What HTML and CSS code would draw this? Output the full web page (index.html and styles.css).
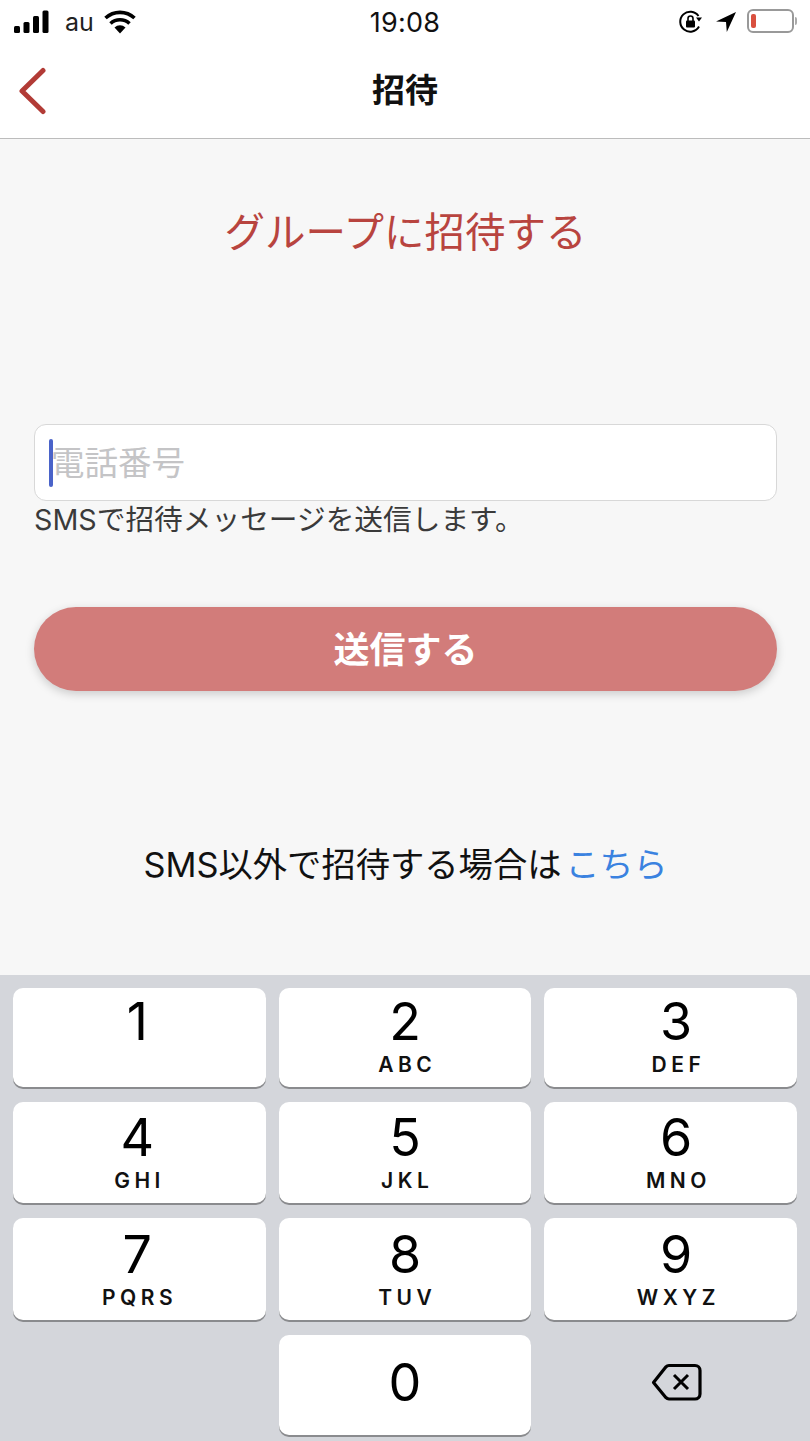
FILE: index.html
```html
<!DOCTYPE html>
<html lang="ja">
<head>
<meta charset="utf-8">
<title>招待</title>
<link rel="stylesheet" href="styles.css">
</head>
<body>
<div class="status">
  <div class="status-left">
    <svg class="signal" width="36" height="24" viewBox="0 0 36 24"><rect x="0" y="16" width="6" height="7" rx="1.5"/><rect x="9.5" y="12" width="6" height="11" rx="1.5"/><rect x="19" y="6" width="6" height="17" rx="1.5"/><rect x="28.500" y="0.500" width="6" height="22.500" rx="1.500"/></svg>
    <span class="carrier">au</span>
    <svg class="wifi" width="34" height="24" viewBox="0 0 34 24"><path d="M17 23.500l-5.500-6a8 8 0 0 1 11 0z"/><path d="M7.500 13.500a14 14 0 0 1 19 0" fill="none" stroke="#000" stroke-width="3.600"/><path d="M2.500 8a21.500 21.500 0 0 1 29 0" fill="none" stroke="#000" stroke-width="3.600"/></svg>
  </div>
  <div class="time">19:08</div>
  <div class="status-right">
    <svg class="lock" width="24" height="24" viewBox="0 0 24 24"><path d="M20 16.500A10 10 0 1 1 19.500 6" fill="none" stroke="#000" stroke-width="2"/><path d="M17 7.500l6 0-3 4z"/><rect x="7" y="10.500" width="9" height="7" rx="1"/><path d="M9 11V8.500a2.500 2.500 0 0 1 5 0V11" fill="none" stroke="#000" stroke-width="1.600"/></svg>
    <svg class="arrow" width="22" height="22" viewBox="0 0 22 22"><path d="M21 1L1 10.500l10 .6 .8 10z"/></svg>
    <div class="battery"><div class="battery-body"><div class="battery-level"></div></div><div class="battery-cap"></div></div>
  </div>
</div>
<header class="nav">
  <svg class="back" width="30" height="48" viewBox="0 0 30 48"><path d="M26 3.500L5 24l21 20.500" fill="none" stroke="#b23b36" stroke-width="5" stroke-linecap="round" stroke-linejoin="round"/></svg>
  <h1 class="nav-title">招待</h1>
</header>
<main class="main">
  <h2 class="heading">グループに招待する</h2>
  <div class="field"><span class="caret"></span><span class="placeholder">電話番号</span></div>
  <p class="help">SMSで招待メッセージを送信します。</p>
  <button class="send">送信する</button>
  <p class="other">SMS以外で招待する場合は<a class="link">こちら</a></p>
</main>
<section class="keyboard">
  <div class="key"><span class="num">1</span></div>
  <div class="key"><span class="num">2</span><span class="letters">ABC</span></div>
  <div class="key"><span class="num">3</span><span class="letters">DEF</span></div>
  <div class="key"><span class="num">4</span><span class="letters">GHI</span></div>
  <div class="key"><span class="num">5</span><span class="letters">JKL</span></div>
  <div class="key"><span class="num">6</span><span class="letters">MNO</span></div>
  <div class="key"><span class="num">7</span><span class="letters">PQRS</span></div>
  <div class="key"><span class="num">8</span><span class="letters">TUV</span></div>
  <div class="key"><span class="num">9</span><span class="letters">WXYZ</span></div>
  <div class="blank"></div>
  <div class="key zero"><span class="num">0</span></div>
  <div class="delete">
    <svg width="52" height="38" viewBox="0 0 52 38"><path d="M18 2.500H44a5 5 0 0 1 5 5V31a5 5 0 0 1-5 5H18a4 4 0 0 1-3-1.300L2.500 19.500 15 3.800a4 4 0 0 1 3-1.300z" fill="none" stroke="#000" stroke-width="3.200" stroke-linejoin="round"/><path d="M23 12l14 14M37 12L23 26" fill="none" stroke="#000" stroke-width="3"/></svg>
  </div>
</section>
</body>
</html>
```
FILE: styles.css
```css
* { box-sizing: border-box; }
html, body { margin: 0; padding: 0; }
body {
  width: 810px;
  height: 1441px;
  overflow: hidden;
  background: #fff;
  font-family: Inter, "Noto Sans CJK JP", sans-serif;
  color: #000;
}
.status {
  height: 40px;
  padding: 4px 13px 0 14px;
  display: grid;
  grid-template-columns: 1fr auto 1fr;
  align-items: center;
}
.status-left { display: flex; align-items: center; gap: 15px; }
.wifi { margin-left: -6px; }
.carrier { font-size: 25px; color: #222; }
.time { font-size: 27px; font-weight: 400; color: #111; letter-spacing: 0.3px; margin-right: 1px; }
.status-right { display: flex; align-items: center; justify-content: flex-end; gap: 10px; margin-top: -1px; }
.lock { margin-right: 2px; }
.battery { display: flex; align-items: center; gap: 1px; margin-top: -1px; }
.battery-body { width: 47px; height: 24px; border: 2px solid #999; border-radius: 6px; padding: 3px 2px; background: #fff; }
.battery-level { width: 5px; height: 14px; background: #d9503f; border-radius: 2px; }
.battery-cap { width: 2px; height: 8px; background: #aaa; border-radius: 0 2px 2px 0; }
.nav {
  height: 99px;
  border-bottom: 1px solid #bcbcbc;
  display: flex;
  align-items: center;
  justify-content: center;
  position: relative;
}
.back { position: absolute; left: 17px; top: 27px; }
.nav-title { margin: 2px 0 0; font-size: 33px; font-weight: 700; line-height: 1.3; color: #111; }
.main {
  height: 836px;
  background: #f7f7f7;
  padding: 64px 33px 0 34px;
  display: flex;
  flex-direction: column;
}
.heading { margin: 0; font-size: 40.500px; line-height: 60px; font-weight: 400; color: #b8443f; text-align: center; height: 60px; }
.field {
  margin-top: 161px;
  height: 77px;
  background: #fff;
  border: 1px solid #d8d8d8;
  border-radius: 12px;
  display: flex;
  align-items: center;
  padding-left: 14px;
}
.caret { width: 4px; height: 48px; background: #4a63c9; border-radius: 2px; flex: none; }
.placeholder { font-size: 33.500px; color: #c4c4c6; margin: -4px 0 0 -2px; }
.help { margin: 0; font-size: 28.700px; line-height: 38px; color: #3a3a3a; }
.send {
  margin-top: 68px;
  height: 84px;
  width: 743px;
  border: 0;
  padding: 0 0 4px;
  border-radius: 42px;
  background: #d27c7a;
  color: #fff;
  font: 700 36px Inter, "Noto Sans CJK JP", sans-serif;
  box-shadow: 0 3px 10px rgba(0, 0, 0, 0.18);
}
.other { margin: 151px 0 0; font-size: 34.300px; line-height: 46px; text-align: center; color: #111; }
.link { color: #3a82e0; margin-left: 4px; font-size: 34px; }
.keyboard {
  height: 466px;
  background: #d4d6db;
  padding: 13px 13px 6px;
  display: grid;
  grid-template-columns: repeat(3, 1fr);
  grid-template-rows: 99px 101px 102px 100px;
  column-gap: 13px;
  row-gap: 15px;
}
.key {
  background: #fff;
  border-radius: 10px;
  box-shadow: 0 2px 0 #8a8b8e;
  display: flex;
  flex-direction: column;
  align-items: center;
}
.key:nth-child(3n+1) { padding-right: 4px; }
.key:nth-child(3n) { padding-left: 11px; }
.key:nth-child(n+4):nth-child(-n+6) { padding-top: 2px; }
.key:nth-child(n+7):nth-child(-n+9) { padding-top: 3px; }
.num { font-size: 52px; line-height: 66px; font-weight: 400; margin-top: 1px; }
.letters { font-size: 21px; line-height: 24px; font-weight: 600; letter-spacing: 4.500px; margin-right: -4.500px; margin-top: -2px; color: #111; }
.zero .num { margin-top: 15px; }
.delete { display: flex; align-items: center; justify-content: center; padding: 0 0 6px 12px; }
```
